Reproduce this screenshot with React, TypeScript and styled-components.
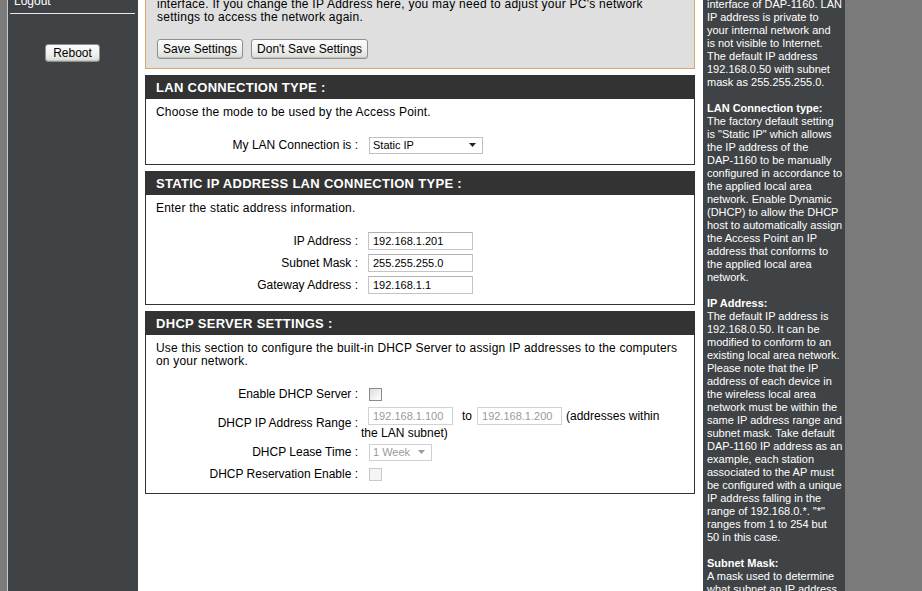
import * as React from 'react';
import styled, { createGlobalStyle } from 'styled-components';

const GlobalStyle = createGlobalStyle`
  html, body {
    margin: 0;
    padding: 0;
    background: #7b7b7b;
    overflow: hidden;
  }
  body {
    font-family: 'Liberation Sans', Arial, sans-serif;
    font-size: 12px;
    color: #000;
  }
`;

type Row = { label: string; value: React.ReactNode };

const helpSections: { title?: string; lines: string[] }[] = [
  {
    lines: [
      'interface of DAP-1160. LAN',
      'IP address is private to',
      'your internal network and',
      'is not visible to Internet.',
      'The default IP address',
      '192.168.0.50 with subnet',
      'mask as 255.255.255.0.',
    ],
  },
  {
    title: 'LAN Connection type:',
    lines: [
      'The factory default setting',
      'is "Static IP" which allows',
      'the IP address of the',
      'DAP-1160 to be manually',
      'configured in accordance to',
      'the applied local area',
      'network. Enable Dynamic',
      '(DHCP) to allow the DHCP',
      'host to automatically assign',
      'the Access Point an IP',
      'address that conforms to',
      'the applied local area',
      'network.',
    ],
  },
  {
    title: 'IP Address:',
    lines: [
      'The default IP address is',
      '192.168.0.50. It can be',
      'modified to conform to an',
      'existing local area network.',
      'Please note that the IP',
      'address of each device in',
      'the wireless local area',
      'network must be within the',
      'same IP address range and',
      'subnet mask. Take default',
      'DAP-1160 IP address as an',
      'example, each station',
      'associated to the AP must',
      'be configured with a unique',
      'IP address falling in the',
      'range of 192.168.0.*. "*"',
      'ranges from 1 to 254 but',
      '50 in this case.',
    ],
  },
  {
    title: 'Subnet Mask:',
    lines: ['A mask used to determine', 'what subnet an IP address'],
  },
];

const Section = ({
  title,
  intro,
  rows,
}: {
  title: string;
  intro: React.ReactNode;
  rows: Row[];
}) => (
  <SectionBox>
    <SectionHeader>{title}</SectionHeader>
    <SectionBody>
      <Intro>{intro}</Intro>
      <FormGrid>
        {rows.map((row, idx) => (
          <React.Fragment key={`row-${idx}`}>
            <FieldLabel>{row.label} :</FieldLabel>
            <FieldValue>{row.value}</FieldValue>
          </React.Fragment>
        ))}
      </FormGrid>
    </SectionBody>
  </SectionBox>
);

const Dropdown = ({
  value,
  width,
  disabled,
}: {
  value: string;
  width: number;
  disabled?: boolean;
}) => (
  <SelectWrap $width={width} $disabled={disabled}>
    <SelectText $disabled={disabled}>{value}</SelectText>
    <svg width="7" height="4" viewBox="0 0 7 4">
      <path d="M0 0 L7 0 L3.5 4 Z" fill={disabled ? '#9a9a9a' : '#222'} />
    </svg>
  </SelectWrap>
);

export default function App() {
  return (
    <>
      <GlobalStyle />
      <Page>
        <LeftBar>
          <NavList>
            <NavItem>Logout</NavItem>
          </NavList>
          <RebootWrap>
            <WinButton $small>Reboot</WinButton>
          </RebootWrap>
        </LeftBar>

        <Main>
          <NoticeBox>
            <NoticeText>
              interface. If you change the IP Address here, you may need to adjust your PC's
              network
              <br />
              settings to access the network again.
            </NoticeText>
            <ButtonRow>
              <WinButton>Save Settings</WinButton>
              <WinButton>Don't Save Settings</WinButton>
            </ButtonRow>
          </NoticeBox>

          <Section
            title="LAN CONNECTION TYPE :"
            intro="Choose the mode to be used by the Access Point."
            rows={[
              {
                label: 'My LAN Connection is',
                value: <Dropdown value="Static IP" width={114} />,
              },
            ]}
          />

          <Section
            title="STATIC IP ADDRESS LAN CONNECTION TYPE :"
            intro="Enter the static address information."
            rows={[
              { label: 'IP Address', value: <TextInput defaultValue="192.168.1.201" /> },
              { label: 'Subnet Mask', value: <TextInput defaultValue="255.255.255.0" /> },
              { label: 'Gateway Address', value: <TextInput defaultValue="192.168.1.1" /> },
            ]}
          />

          <Section
            title="DHCP SERVER SETTINGS :"
            intro={
              <>
                Use this section to configure the built-in DHCP Server to assign IP addresses to
                the computers
                <br />
                on your network.
              </>
            }
            rows={[
              { label: 'Enable DHCP Server', value: <CheckBox /> },
              {
                label: 'DHCP IP Address Range',
                value: (
                  <RangeCell>
                    <RangeLine>
                      <TextInput $narrow disabled defaultValue="192.168.1.100" />
                      <RangeTo>to</RangeTo>
                      <TextInput $narrow $flush disabled defaultValue="192.168.1.200" />
                      <RangeNote>(addresses within</RangeNote>
                    </RangeLine>
                    <RangeWrap>the LAN subnet)</RangeWrap>
                  </RangeCell>
                ),
              },
              {
                label: 'DHCP Lease Time',
                value: <Dropdown value="1 Week" width={63} disabled />,
              },
              { label: 'DHCP Reservation Enable', value: <CheckBox $disabled /> },
            ]}
          />
        </Main>

        <HelpBar>
          {helpSections.map((section, idx) => (
            <HelpBlock key={`help-${idx}`}>
              {section.title && <HelpTitle>{section.title}</HelpTitle>}
              {section.lines.map((line, i) => (
                <HelpLine key={`line-${i}`}>{line}</HelpLine>
              ))}
            </HelpBlock>
          ))}
        </HelpBar>
      </Page>
    </>
  );
}

const Page = styled.div({
  display: 'flex',
  alignItems: 'stretch',
  marginTop: -10,
  marginLeft: 7,
  width: 838,
  minHeight: 'calc(100vh + 10px)',
  borderLeft: '1px solid #c9c9c9',
});

const LeftBar = styled.div({
  width: 130,
  flex: '0 0 130px',
  background: '#404345',
  padding: '4px 3px 0 2px',
  boxSizing: 'border-box',
});

const NavList = styled.ul({
  listStyle: 'none',
  margin: 0,
  padding: 0,
});

const NavItem = styled.li({
  color: '#fff',
  fontSize: 12,
  lineHeight: '15px',
  paddingLeft: 4,
  paddingBottom: 4,
  borderBottom: '1px solid #e8e8e8',
});

const RebootWrap = styled.div({
  display: 'flex',
  justifyContent: 'center',
  marginTop: 30,
});

const WinButton = styled.button<{ $small?: boolean }>(({ $small }) => ({
  fontFamily: "'Liberation Sans', Arial, sans-serif",
  fontSize: 12,
  color: '#000',
  height: $small ? 18 : 20,
  padding: $small ? '0 7px' : '0 5px',
  border: '1px solid #8f8f8f',
  borderRadius: 3,
  background: 'linear-gradient(to bottom, #fdfdfd 0%, #f0f0ee 55%, #dcdcd6 100%)',
  boxShadow: 'inset 0 -1px 0 #c6c6c0',
  cursor: 'pointer',
}));

const Main = styled.div({
  width: 565,
  flex: '0 0 565px',
  background: '#fff',
  padding: '0 8px 0 7px',
  boxSizing: 'border-box',
});

const NoticeBox = styled.div({
  background: '#dfdfdf',
  border: '1px solid #dca46e',
  padding: '7px 10px 9px 11px',
  marginBottom: 6,
});

const NoticeText = styled.p({
  margin: 0,
  lineHeight: '13px',
  letterSpacing: 0.25,
  whiteSpace: 'nowrap',
});

const ButtonRow = styled.div({
  display: 'flex',
  gap: 8,
  marginTop: 15,
});

const SectionBox = styled.section({
  border: '1px solid #333',
  borderTop: 'none',
  marginBottom: 6,
});

const SectionHeader = styled.h2({
  margin: 0,
  height: 24,
  lineHeight: '25px',
  background: '#333333',
  color: '#fff',
  fontSize: 13,
  fontWeight: 'bold',
  letterSpacing: 0.3,
  paddingLeft: 10,
});

const SectionBody = styled.div({
  padding: '7px 10px 8px',
});

const Intro = styled.p({
  margin: '0 0 15px',
  lineHeight: '13px',
  letterSpacing: 0.2,
});

const FormGrid = styled.div({
  display: 'grid',
  gridTemplateColumns: '202px 1fr',
  columnGap: 3,
  gridAutoRows: 'minmax(22px, auto)',
  alignItems: 'center',
});

const FieldLabel = styled.div({
  textAlign: 'right',
  whiteSpace: 'nowrap',
});

const FieldValue = styled.div({
  display: 'flex',
  alignItems: 'center',
});

const TextInput = styled.input<{ $narrow?: boolean; $flush?: boolean }>(
  ({ $narrow, $flush }) => ({
    width: $narrow ? 85 : 105,
    height: 18,
    boxSizing: 'border-box',
    marginLeft: $flush ? 0 : 7,
    padding: '0 4px',
    border: '1px solid #c4c4c4',
    borderTopColor: '#b0b0b0',
    fontFamily: "'Liberation Sans', Arial, sans-serif",
    fontSize: 11,
    color: '#000',
    background: '#fff',
    '&:disabled': {
      color: '#9a9a9a',
      borderColor: '#d2d2d2',
    },
  })
);

const SelectWrap = styled.div<{ $width: number; $disabled?: boolean }>(
  ({ $width, $disabled }) => ({
    width: $width,
    height: 17,
    boxSizing: 'border-box',
    marginLeft: 8,
    border: `1px solid ${$disabled ? '#d0d0d0' : '#c0c0c0'}`,
    display: 'flex',
    alignItems: 'center',
    justifyContent: 'space-between',
    padding: '0 6px 0 3px',
    background: '#fff',
  })
);

const SelectText = styled.span<{ $disabled?: boolean }>(({ $disabled }) => ({
  fontSize: 11,
  color: $disabled ? '#9a9a9a' : '#000',
}));

const CheckBox = styled.span<{ $disabled?: boolean }>(({ $disabled }) => ({
  display: 'inline-block',
  width: 13,
  height: 13,
  boxSizing: 'border-box',
  marginLeft: 8,
  border: `1px solid ${$disabled ? '#c8c8c8' : '#8a8a8a'}`,
  background: $disabled
    ? '#f4f4f4'
    : 'linear-gradient(135deg, #dcdcdc 0%, #f6f6f6 70%, #fff 100%)',
}));

const RangeCell = styled.div({
  display: 'flex',
  flexDirection: 'column',
  paddingTop: 1,
});

const RangeLine = styled.div({
  display: 'flex',
  alignItems: 'center',
  height: 20,
});

const RangeTo = styled.span({
  margin: '0 5px 0 9px',
});

const RangeNote = styled.span({
  marginLeft: 4,
  whiteSpace: 'nowrap',
});

const RangeWrap = styled.span({
  lineHeight: '15px',
});

const HelpBar = styled.aside({
  width: 142,
  flex: '0 0 142px',
  background: '#404345',
  color: '#fff',
  padding: '8px 0 0 4px',
  boxSizing: 'border-box',
  fontSize: 11,
  lineHeight: '13px',
});

const HelpBlock = styled.div({
  marginBottom: 13,
});

const HelpTitle = styled.div({
  fontWeight: 'bold',
  whiteSpace: 'nowrap',
});

const HelpLine = styled.div({
  whiteSpace: 'nowrap',
});
